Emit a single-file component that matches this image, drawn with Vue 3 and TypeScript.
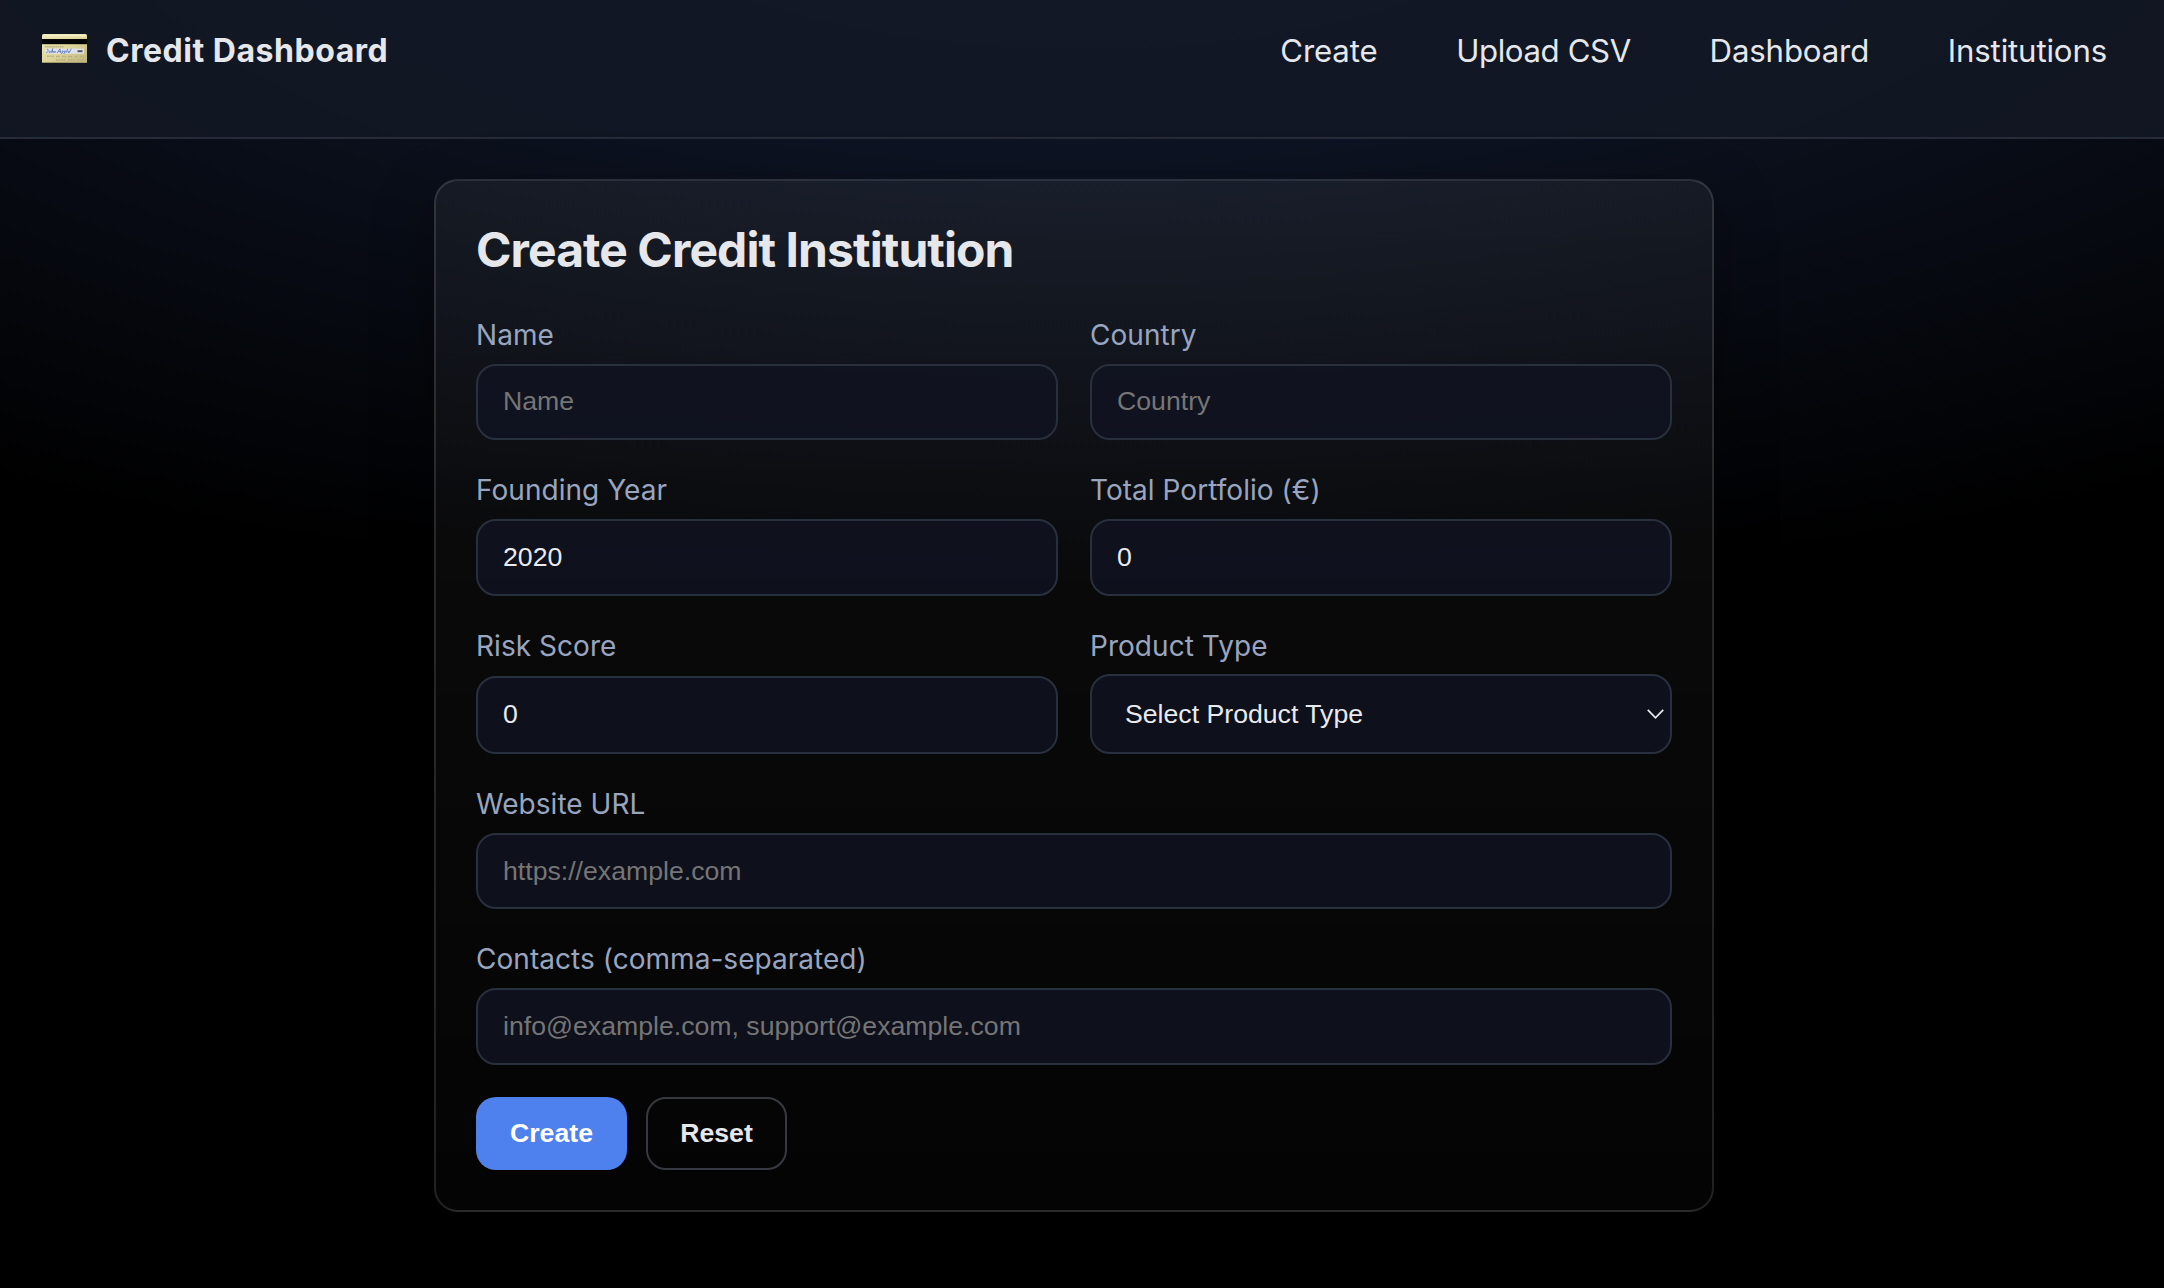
<script setup lang="ts">
import { reactive } from 'vue'

interface InstitutionForm {
  name: string
  country: string
  foundingYear: number
  totalPortfolio: number
  riskScore: number
  productType: string
  websiteUrl: string
  contacts: string
}

const links = ['Create', 'Upload CSV', 'Dashboard', 'Institutions']

const emptyForm = (): InstitutionForm => ({
  name: '',
  country: '',
  foundingYear: 2020,
  totalPortfolio: 0,
  riskScore: 0,
  productType: '',
  websiteUrl: '',
  contacts: '',
})

const form = reactive<InstitutionForm>(emptyForm())

function reset() {
  Object.assign(form, emptyForm())
}
</script>

<template>
  <div class="page">
    <header class="topbar">
      <div class="brand">
        <svg class="card-icon" width="45" height="29" viewBox="0 0 45 29" aria-hidden="true">
          <defs>
            <linearGradient id="gold" x1="0" y1="0" x2="1" y2="1">
              <stop offset="0" stop-color="#efe8b8" />
              <stop offset="0.5" stop-color="#e0d79c" />
              <stop offset="1" stop-color="#bdb37c" />
            </linearGradient>
          </defs>
          <rect width="45" height="29" rx="1.6" fill="url(#gold)" />
          <rect x="0.6" y="0.4" width="43.8" height="2" rx="1" fill="#f4eec4" />
          <rect y="5" width="45" height="5.2" fill="#050505" />
          <path d="M3 12.8h19" stroke="#a19b76" stroke-width="1" stroke-dasharray="1.6 .5" />
          <rect x="3" y="14.6" width="39" height="5.2" fill="#dfe1e8" />
          <path
            d="M5 15.2c1.8-.6 1.4 3.6-.8 3.6M7.4 17.5c1-1.2 1.8.8.4 1.1-1 .1-.9-.8-.4-1.1M9.5 18.6l1.2-4-.6 4 1.3-1.6.6 1.6 1.2-1.5v1.5M15 19l3-4.2.6 4M16 17.6h2.6M19.6 20l.8-3.2c1.4-.4 1.2 1.6-.2 1.7M22 20l.8-3.2c1.4-.4 1.2 1.6-.2 1.7M24.5 18.6l1.2-4M26.3 18.4c1.6-.5 1.2-2 .2-1.3-.8.8-.4 1.6.8 1.5l2-4"
            fill="none"
            stroke="#6480c6"
            stroke-width=".9"
          />
          <path d="M35.5 17.2h5" stroke="#555" stroke-width="1.9" />
          <path
            d="M5 22.2h7M14 22.6h4M20 22.6h4M26 22.6h5M33 22.6h3M38 22.6h4M14 26h10M26 26h7M35 26h7"
            stroke="#b8af80"
            stroke-width="1.5"
            stroke-dasharray="1.8 .7"
          />
          <rect y="28" width="45" height="1" rx=".5" fill="#a39a6a" />
        </svg>
        <span class="brand-name">Credit Dashboard</span>
      </div>
      <nav class="nav">
        <a v-for="link in links" :key="link" :class="{ tight: link === 'Upload CSV' }">{{ link }}</a>
      </nav>
    </header>

    <main class="card">
      <h1>Create Credit Institution</h1>
      <form @submit.prevent>
        <div class="grid">
          <div class="field">
            <label for="name">Name</label>
            <input id="name" v-model="form.name" type="text" placeholder="Name" />
          </div>
          <div class="field">
            <label for="country">Country</label>
            <input id="country" v-model="form.country" type="text" placeholder="Country" />
          </div>
          <div class="field">
            <label for="year">Founding Year</label>
            <input id="year" v-model="form.foundingYear" class="mid" type="number" />
          </div>
          <div class="field">
            <label for="portfolio">Total Portfolio (€)</label>
            <input id="portfolio" v-model="form.totalPortfolio" class="mid" type="number" />
          </div>
          <div class="field">
            <label for="risk">Risk Score</label>
            <input id="risk" v-model="form.riskScore" class="tall" type="number" />
          </div>
          <div class="field">
            <label for="product">Product Type</label>
            <div class="select-wrap">
              <select id="product" v-model="form.productType">
                <option value="">Select Product Type</option>
              </select>
              <svg class="chevron" width="19" height="12" viewBox="0 0 19 12" aria-hidden="true">
                <path d="M1.8 1.8 9.5 9.8 17.2 1.8" fill="none" stroke="#e5e7eb" stroke-width="1.8" />
              </svg>
            </div>
          </div>
          <div class="field wide">
            <label for="url">Website URL</label>
            <input id="url" v-model="form.websiteUrl" class="low" type="text" placeholder="https://example.com" />
          </div>
          <div class="field wide">
            <label for="contacts">Contacts (comma-separated)</label>
            <input
              id="contacts"
              v-model="form.contacts"
              class="mid"
              type="text"
              placeholder="info@example.com, support@example.com"
            />
          </div>
        </div>
        <div class="actions">
          <button class="primary" type="submit">Create</button>
          <button class="ghost" type="button" @click="reset">Reset</button>
        </div>
      </form>
    </main>
  </div>
</template>

<style>
html,
body {
  margin: 0;
  background: #000;
}
</style>

<style scoped>
.page {
  box-sizing: border-box;
  height: 1288px;
  overflow: hidden;
  background: radial-gradient(3300px 1220px at 50% -10%, #151f37 0%, #000 60%) #000;
  color: #e5e7eb;
  font-family: Inter, 'Liberation Sans', sans-serif;
}

.topbar {
  box-sizing: border-box;
  display: flex;
  justify-content: space-between;
  align-items: flex-start;
  height: 139px;
  padding: 31px 57px 0 42px;
  border-bottom: 2px solid #262b37;
  background: rgba(18, 24, 36, 0.88);
}

.brand {
  display: flex;
  align-items: flex-start;
  gap: 19px;
}

.card-icon {
  display: block;
  margin-top: 3px;
}

.brand-name {
  font-size: 32px;
  font-weight: 700;
  line-height: 40px;
  letter-spacing: 0.53px;
}

.nav {
  display: flex;
  gap: 78.7px;
}

.nav a {
  font-size: 31.2px;
  line-height: 41px;
  letter-spacing: -0.15px;
}

.nav a.tight {
  letter-spacing: -0.38px;
}

.card {
  box-sizing: border-box;
  width: 1280px;
  height: 1033px;
  margin: 40px 0 0 434px;
  padding: 40px;
  border: 2px solid rgba(255, 255, 255, 0.12);
  border-radius: 24px;
  background: linear-gradient(180deg, rgba(255, 255, 255, 0.05), rgba(255, 255, 255, 0.015));
  box-shadow: 0 20px 60px rgba(0, 0, 0, 0.35);
}

h1 {
  margin: 0 0 38px;
  font-size: 48px;
  font-weight: 700;
  line-height: 58px;
  letter-spacing: -0.93px;
}

.grid {
  display: grid;
  grid-template-columns: 1fr 1fr;
  grid-template-rows: 123px 124px 126px 123px 124px;
  gap: 32px;
}

.field {
  display: flex;
  flex-direction: column;
  justify-content: space-between;
}

.wide {
  grid-column: 1 / -1;
}

label {
  color: #99a5bf;
  font-size: 28px;
  line-height: 36px;
  letter-spacing: 0.04px;
}

input,
select {
  box-sizing: border-box;
  display: block;
  width: 100%;
  height: 76px;
  margin: 0;
  padding: 0 25px 2px;
  border: 2px solid #282f3d;
  border-radius: 20px;
  outline: none;
  background: rgba(16, 19, 34, 0.8);
  color: #e8eaee;
  font-family: 'Liberation Sans', Arial, sans-serif;
  font-size: 26.667px;
  appearance: none;
}

input.mid {
  height: 77px;
  padding-bottom: 1px;
}

input.tall {
  height: 78px;
  padding-bottom: 1px;
}

input.low {
  padding-bottom: 0;
}

input::placeholder {
  color: #757575;
  opacity: 1;
}

.select-wrap {
  position: relative;
}

select {
  height: 80px;
  padding: 0 48px 0 33px;
}

.chevron {
  position: absolute;
  top: 34px;
  right: 7px;
}

.actions {
  display: flex;
  gap: 19px;
  margin-top: 32px;
}

button {
  box-sizing: border-box;
  height: 73px;
  padding: 0 0 1px;
  border-radius: 20px;
  font-family: 'Liberation Sans', Arial, sans-serif;
  font-size: 26.667px;
  font-weight: 700;
}

.primary {
  width: 151px;
  border: 0;
  background: #4e80ee;
  color: #fff;
}

.ghost {
  width: 141px;
  border: 2px solid #363a40;
  background: transparent;
  color: #e5e7eb;
}
</style>
